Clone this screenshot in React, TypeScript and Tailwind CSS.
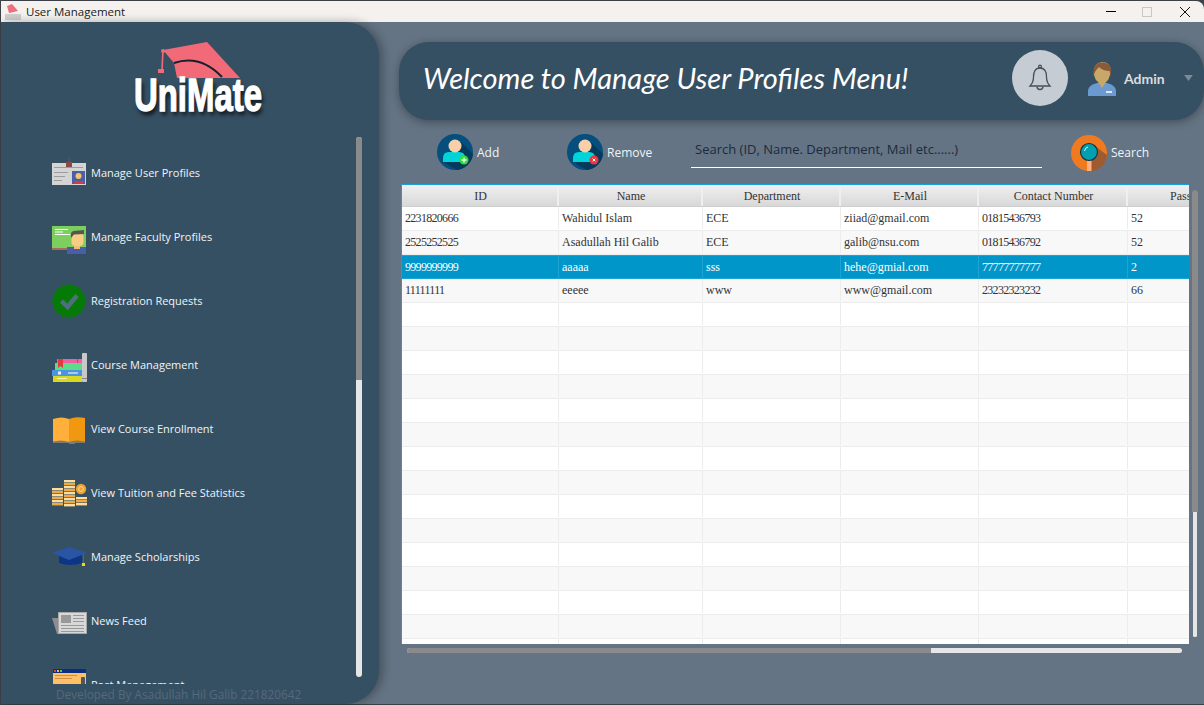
import React from 'react';

const openSans = "font-['Open_Sans',sans-serif]";

function IdCardIcon() {
  return (
    <svg viewBox="0 0 36 36" className="w-9 h-9">
      <rect x="16.5" y="2" width="1.5" height="6" fill="#555" />
      <rect x="0" y="8" width="34" height="22" fill="#d4d4d4" />
      <rect x="14" y="7" width="6" height="5" fill="#8a4a4a" />
      <rect x="2" y="12" width="29" height="1" fill="#9c9c9c" />
      <rect x="2" y="17" width="14" height="1" fill="#9c9c9c" />
      <rect x="2" y="21" width="11" height="1" fill="#9c9c9c" />
      <rect x="2" y="25" width="8" height="1" fill="#9c9c9c" />
      <rect x="20" y="16" width="13" height="13" fill="#4a5fa8" />
      <circle cx="26.5" cy="21" r="3" fill="#f6c56f" />
      <rect x="22" y="26" width="9" height="3" fill="#d63a3a" />
    </svg>
  );
}

function FacultyIcon() {
  return (
    <svg viewBox="0 0 36 36" className="w-9 h-9">
      <rect x="0" y="7" width="34" height="24" fill="#7ccf5e" />
      <rect x="0" y="29" width="16" height="2" fill="#a56a5a" />
      <rect x="3" y="10" width="13" height="1" fill="#fff" />
      <rect x="3" y="12.5" width="8" height="1" fill="#fff" />
      <rect x="3" y="15" width="15" height="1" fill="#fff" />
      <rect x="15" y="28" width="19" height="7" fill="#4a5ea8" />
      <rect x="22" y="24" width="6" height="6" fill="#f0bd75" />
      <rect x="19.5" y="14" width="12" height="13" rx="4" fill="#f8cc85" />
      <path d="M19 19 V14 L21 12 L32 11 V15 L22 15.5 Z" fill="#555" />
    </svg>
  );
}

function BadgeIcon() {
  const points: string[] = [];
  for (let i = 0; i < 32; i++) {
    const r = i % 2 === 0 ? 17.8 : 15.4;
    const a = (i / 32) * Math.PI * 2;
    points.push(`${17 + r * Math.cos(a)},${18 + r * Math.sin(a)}`);
  }
  return (
    <svg viewBox="0 0 36 36" className="w-9 h-9">
      <polygon points={points.join(' ')} fill="#067a06" />
      <path d="M9.5 18 L15.5 24 L25 12.5" fill="none" stroke="#4f6f7f" strokeWidth="4.5" />
    </svg>
  );
}

function BooksIcon() {
  return (
    <svg viewBox="0 0 36 36" className="w-9 h-9">
      <rect x="5" y="12" width="25" height="4" fill="#f05fa0" />
      <rect x="3" y="16" width="27" height="7" fill="#5cdc8a" />
      <rect x="0" y="23" width="30" height="6" fill="#4a94e0" />
      <rect x="1" y="29" width="29" height="6" fill="#d8d820" />
      <path d="M6 12 H11 V21 L8.5 19 L6 21 Z" fill="#e8383f" />
      <rect x="6" y="24.5" width="3" height="3" fill="#e8eef5" />
      <rect x="16" y="25.5" width="10" height="1" fill="#fff" />
      <rect x="5" y="31" width="10" height="1" fill="#f4f4b0" />
      <rect x="25" y="12" width="1" height="4" fill="#c83a7a" />
      <rect x="30" y="6" width="5" height="29" rx="1" fill="#c8c8c8" />
      <rect x="30" y="31" width="5" height="1" fill="#888" />
    </svg>
  );
}

function BookIcon() {
  return (
    <svg viewBox="0 0 36 36" className="w-9 h-9">
      <path d="M1 30 H33 V32 H23 V33 H17 V32 H1 Z" fill="#7e7a70" />
      <path d="M1 8 Q10 5 17 8 V31 Q10 29 1 30.5 Z" fill="#ffb03a" />
      <path d="M17 8 Q24 5 33 7 V30.5 Q24 29 17 31 Z" fill="#f0980f" />
    </svg>
  );
}

function CoinsIcon() {
  const stack = (x: number, top: number) => {
    const bars = [];
    for (let y = top, i = 0; y < 30; y += 3, i++) {
      bars.push(<rect key={y} x={x} y={y} width="11" height="2.4" fill={i % 2 === 0 ? '#ffdc98' : '#f0a848'} />);
    }
    return bars;
  };
  return (
    <svg viewBox="0 0 36 36" className="w-9 h-9">
      {stack(0, 13)}
      {stack(12, 5)}
      {stack(24, 22)}
      <circle cx="29" cy="14" r="5.2" fill="#f0a030" />
      <circle cx="29" cy="14" r="2.4" fill="none" stroke="#ffdc98" strokeWidth="1" />
    </svg>
  );
}

function CapIcon() {
  return (
    <svg viewBox="0 0 36 36" className="w-9 h-9">
      <path d="M7 14 H30 V24 Q18 28 7 24 Z" fill="#0d3585" />
      <polygon points="17,8 35,14 17,21 0,14" fill="#2a55a5" />
      <rect x="31" y="15" width="0.8" height="9" fill="#c8402a" />
      <rect x="30" y="24" width="3" height="3" fill="#e8d820" />
    </svg>
  );
}

function NewsIcon() {
  return (
    <svg viewBox="0 0 36 36" className="w-9 h-9">
      <polygon points="0,15 7,15 7,31 5,31" fill="#8d8d8d" />
      <rect x="6.5" y="9.5" width="28" height="21" fill="#d8d8d8" stroke="#a8a8a8" />
      <rect x="9" y="12" width="10" height="8" fill="#999" />
      <rect x="21" y="12" width="11" height="1" fill="#999" />
      <rect x="21" y="15" width="11" height="1" fill="#999" />
      <rect x="21" y="18" width="11" height="1" fill="#999" />
      <rect x="9" y="22" width="23" height="1" fill="#999" />
      <rect x="9" y="25" width="23" height="1" fill="#999" />
      <rect x="9" y="28" width="23" height="1" fill="#999" />
    </svg>
  );
}

function PostIcon() {
  return (
    <svg viewBox="0 0 36 36" className="w-9 h-9">
      <rect x="1" y="2" width="33" height="30" fill="#ffc065" />
      <rect x="1" y="2" width="33" height="4" fill="#0d2d80" />
      <rect x="2" y="3" width="2" height="2" fill="#e04040" />
      <rect x="5" y="3" width="2" height="2" fill="#e0c040" />
      <rect x="8" y="3" width="2" height="2" fill="#60c060" />
      <rect x="3" y="8" width="22" height="1" fill="#c8904a" />
      <rect x="3" y="11" width="17" height="1" fill="#c8904a" />
      <rect x="29" y="10" width="4" height="8" rx="1" fill="#555" />
    </svg>
  );
}

function UserActionIcon({ remove }: { remove?: boolean }) {
  return (
    <svg viewBox="0 0 36 36" className="w-9 h-9 shrink-0">
      <circle cx="18" cy="18" r="18" fill="#044f7e" />
      <path d="M24 8 L36 20 A18 18 0 0 1 20 36 L6 28 Z" fill="#063a5c" />
      <path d="M6 28 V24 Q6 18 12 18 H22 Q28 18 28 24 V28 Z" fill="#00d4d8" />
      <circle cx="18" cy="12" r="6.5" fill="#f8cfa8" />
      <circle cx="27" cy="26" r="4.5" fill={remove ? '#e8383f' : '#2fdc2f'} />
      {remove ? (
        <path d="M25.6 24.6 L28.4 27.4 M28.4 24.6 L25.6 27.4" stroke="#fff" strokeWidth="1" />
      ) : (
        <path d="M24.5 26 H29.5 M27 23.5 V28.5" stroke="#fff" strokeWidth="1.3" />
      )}
    </svg>
  );
}

function SearchIcon() {
  return (
    <svg viewBox="0 0 36 36" className="w-9 h-9 shrink-0">
      <circle cx="18" cy="18" r="18" fill="#f07a20" />
      <path d="M24 11 L36 20 A18 18 0 0 1 22 36 L20 36 V26 Z" fill="#9e5a30" />
      <rect x="16" y="25" width="4.5" height="11" fill="#ffb080" />
      <circle cx="18" cy="17" r="8.5" fill="#00a0b0" stroke="#123344" strokeWidth="1.2" />
      <path d="M13.5 16 Q14 12.5 17 12" fill="none" stroke="#dff" strokeWidth="1" />
    </svg>
  );
}

function AdminAvatar() {
  return (
    <svg viewBox="0 0 28 34" className="w-7 h-[34px] shrink-0">
      <path d="M0 34 V28 Q1 23 9 21 H19 Q27 23 28 28 V34 Z" fill="#6a9ad0" />
      <path d="M10 20 L14 26 L18 20 Z" fill="#c8a868" />
      <rect x="18" y="29" width="6" height="2" fill="#dfe8f0" />
      <path d="M6 9 Q6 1 14 0 Q22 0 22.5 8 L22 13 Q20 21 14 22 Q8 21 6 13 Z" fill="#c8a868" />
      <path d="M5.5 14 Q4 4 11 1 Q18 -1 22 4 Q24 8 22.5 14 L21.5 9 Q15 9 11 5 Q8 8 7 10 Z" fill="#8a5a3a" />
    </svg>
  );
}

function BellIcon() {
  return (
    <svg viewBox="0 0 24 28" className="w-[24px] h-[28px]" fill="none" stroke="#4a5056" strokeWidth="1.3">
      <path d="M12 4 C6.5 4 5.5 9 5.5 13 C5.5 18 4 20 2 22 H22 C20 20 18.5 18 18.5 13 C18.5 9 17.5 4 12 4 Z" />
      <circle cx="12" cy="2.6" r="1.4" />
      <path d="M9 22.5 C9 26.5 15 26.5 15 22.5" />
    </svg>
  );
}

const menuItems = [
  { label: 'Manage User Profiles', icon: <IdCardIcon /> },
  { label: 'Manage Faculty Profiles', icon: <FacultyIcon /> },
  { label: 'Registration Requests', icon: <BadgeIcon /> },
  { label: 'Course Management', icon: <BooksIcon /> },
  { label: 'View Course Enrollment', icon: <BookIcon /> },
  { label: 'View Tuition and Fee Statistics', icon: <CoinsIcon /> },
  { label: 'Manage Scholarships', icon: <CapIcon /> },
  { label: 'News Feed', icon: <NewsIcon /> },
  { label: 'Post Management', icon: <PostIcon /> },
];

const columns = ['ID', 'Name', 'Department', 'E-Mail', 'Contact Number', 'Password'];

const rows = [
  ['2231820666', 'Wahidul Islam', 'ECE', 'ziiad@gmail.com', '01815436793', '52'],
  ['2525252525', 'Asadullah Hil Galib', 'ECE', 'galib@nsu.com', '01815436792', '52'],
  ['9999999999', 'aaaaa', 'sss', 'hehe@gmial.com', '77777777777', '2'],
  ['11111111', 'eeeee', 'www', 'www@gmail.com', '23232323232', '66'],
];

const emptyRows = Array.from({ length: 15 }, () => ['', '', '', '', '', '']);

const gridCols = 'grid grid-cols-[157px_144px_138px_138px_149px_130px] w-[856px]';

function Logo() {
  return (
    <div className="relative h-[115px] shrink-0">
      <svg viewBox="0 0 170 100" className="absolute left-[109px] top-[8px] w-[170px] h-[100px]">
        <path d="M53 20 L97 12 L130 48 L67 48 L64 33 Z" fill="#f26a78" />
        <path d="M64 33 Q90 24 112 47" fill="none" stroke="#14202c" strokeWidth="2" />
        <path d="M53 20 L52 40" stroke="#f26a78" strokeWidth="1.6" />
        <circle cx="53" cy="21" r="2" fill="#f26a78" />
        <rect x="48" y="39" width="6" height="4" fill="#f26a78" />
      </svg>
      <div className="absolute left-[133px] top-[44px] whitespace-nowrap origin-left scale-x-[0.7] font-['Liberation_Sans',sans-serif] font-bold text-[47px] leading-[58px] text-white [-webkit-text-stroke:1.4px_#fff] [text-shadow:3px_4px_5px_rgba(0,0,0,0.75)]">
        UniMate
      </div>
    </div>
  );
}

function Sidebar() {
  return (
    <aside className={`relative z-10 w-[378px] shrink-0 h-full flex flex-col bg-[#365063] rounded-r-[34px] shadow-[4px_0_10px_rgba(0,0,0,0.3)] ${openSans}`}>
      <Logo />
      <div className="flex h-[547px] shrink-0">
        <div className="flex-1 h-full overflow-hidden pt-1 pl-[51px]">
          {menuItems.map(item => (
            <div key={item.label} className="flex items-center h-16">
              <div className="w-9 mr-[3px] shrink-0">{item.icon}</div>
              <span className="text-[11px] text-[#eef4f8]">{item.label}</span>
            </div>
          ))}
        </div>
        <div className="w-[6px] h-[540px] mr-[17px] flex flex-col items-center rounded-full overflow-hidden bg-[#e6e6e6]">
          <div className="w-[6px] h-[243px] bg-[#8a8a8a] shrink-0" />
        </div>
      </div>
      <div className="pl-[55px] pt-[2px] text-[11.8px] leading-[17px] text-[#55697a]">
        Developed By Asadullah Hil Galib 221820642
      </div>
    </aside>
  );
}

function TopBanner() {
  return (
    <header className="ml-5 mt-5 h-[78px] flex items-center rounded-[30px] bg-[#365063] shadow-[0_2px_10px_rgba(0,0,0,0.35)] shrink-0">
      <h1 className="ml-6 mb-[6px] font-['Lato',sans-serif] italic text-[29px] text-white whitespace-nowrap">
        Welcome to Manage User Profiles Menu!
      </h1>
      <div className="ml-auto mb-[6px] w-14 h-14 rounded-full bg-[#c5ccd3] flex items-center justify-center">
        <BellIcon />
      </div>
      <div className="ml-5 mb-[5px] flex items-center">
        <AdminAvatar />
      </div>
      <span className="ml-2 mb-[5px] w-[41px] whitespace-nowrap font-['Lato',sans-serif] font-bold text-[14px] text-[#d9dde0]">Admin</span>
      <svg viewBox="0 0 10 7" className="ml-[19px] mr-[11px] mb-[6px] w-[9px] h-[6px]">
        <polygon points="0,0 10,0 5,7" fill="#7d8b96" />
      </svg>
    </header>
  );
}

function Toolbar() {
  return (
    <div className={`h-[64px] shrink-0 pl-[58px] flex items-start text-[12px] text-[#eef4f8] ${openSans}`}>
      <div className="mt-[14px] w-[130px] flex items-center gap-1">
        <UserActionIcon />
        <span className="mt-px">Add</span>
      </div>
      <div className="mt-[14px] w-[124px] flex items-center gap-1">
        <UserActionIcon remove />
        <span className="mt-px">Remove</span>
      </div>
      <div className="mt-[17px] w-[351px] h-[31px] pl-1 pb-[5px] border-b border-white text-[13px] text-[#1c2b3c] flex items-center">
        Search (ID, Name. Department, Mail etc......)
      </div>
      <div className="mt-[15px] ml-[29px] flex items-center gap-1">
        <SearchIcon />
        <span>Search</span>
      </div>
    </div>
  );
}

function UserTable() {
  return (
    <div className="w-[788px] h-[460px] shrink-0 overflow-hidden bg-white border-l border-t border-[#18a0d8] font-['Liberation_Serif',serif] text-[12px] text-[#333]">
      <div className={`${gridCols} h-[22px] bg-gradient-to-b from-[#f0f0f0] to-[#d8d8d8] border-b border-[#cfcfcf]`}>
        {columns.map(col => (
          <div key={col} className="pl-[2px] flex items-center justify-center border-r-2 border-[#efefef]">{col}</div>
        ))}
      </div>
      {[...rows, ...emptyRows].map((row, i) => {
        const selected = i === 2;
        const rowClass = selected
          ? 'bg-[#0096c9] text-white border-y border-[#1ea4d4]'
          : i % 2 === 0
            ? 'bg-white border-b border-[#ececec] pb-px'
            : 'bg-[#f8f8f8] border-b border-[#ececec] pb-px';
        return (
          <div key={i} className={`${gridCols} h-6 ${rowClass}`}>
            {row.map((cell, j) => (
              <div
                key={j}
                className={`pl-[3px] flex items-center border-r ${selected ? 'border-[#1ea4d4]' : 'border-[#ececec]'} ${/^\d{3,}$/.test(cell) ? 'tracking-[-0.7px]' : ''}`}
              >
                {cell}
              </div>
            ))}
          </div>
        );
      })}
    </div>
  );
}

export default function App() {
  return (
    <div className="w-[1204px] h-[705px] overflow-hidden flex flex-col bg-[#3c4148] pt-px pb-px pl-px">
      <div className="h-[21px] shrink-0 flex items-center bg-[#f5f1ee] rounded-tr-lg">
        <svg viewBox="0 0 18 18" className="ml-[3px] w-[18px] h-[18px]">
          <path d="M3 3 L8 1 L14 8 L5 10 Z" fill="#ef6f7c" />
          <rect x="1" y="11" width="16" height="6" fill="#cfcfcf" />
        </svg>
        <span className={`ml-[4px] text-[11.5px] text-[#1a1a1a] ${openSans}`}>User Management</span>
        <div className="ml-auto w-[10px] h-px bg-black" />
        <div className="ml-[26px] w-[10px] h-[10px] border border-[#c8c8c8]" />
        <svg viewBox="0 0 10 10" className="ml-[28px] mr-[14px] w-[10px] h-[10px]">
          <path d="M0 0 L10 10 M10 0 L0 10" stroke="#111" strokeWidth="1" />
        </svg>
      </div>
      <div className="flex-1 min-h-0 flex bg-[#647484] rounded-bl-sm">
        <Sidebar />
        <main className="flex-1 min-w-0 flex flex-col">
          <TopBanner />
          <Toolbar />
          <div className="flex ml-[22px] shrink-0">
            <UserTable />
            <div className="mt-[6px] ml-[3px] w-[6px] h-[447px] flex flex-col items-center rounded-full overflow-hidden">
              <div className="w-[6px] h-[322px] shrink-0 bg-[#8a8a8a] rounded-t-full" />
              <div className="w-1 flex-1 bg-[#e6e6e6]" />
            </div>
          </div>
          <div className="ml-[28px] mt-1 w-[775px] h-[5px] flex rounded-full overflow-hidden bg-[#e6e6e6]">
            <div className="w-[524px] bg-[#8a8a8a]" />
          </div>
        </main>
      </div>
    </div>
  );
}
